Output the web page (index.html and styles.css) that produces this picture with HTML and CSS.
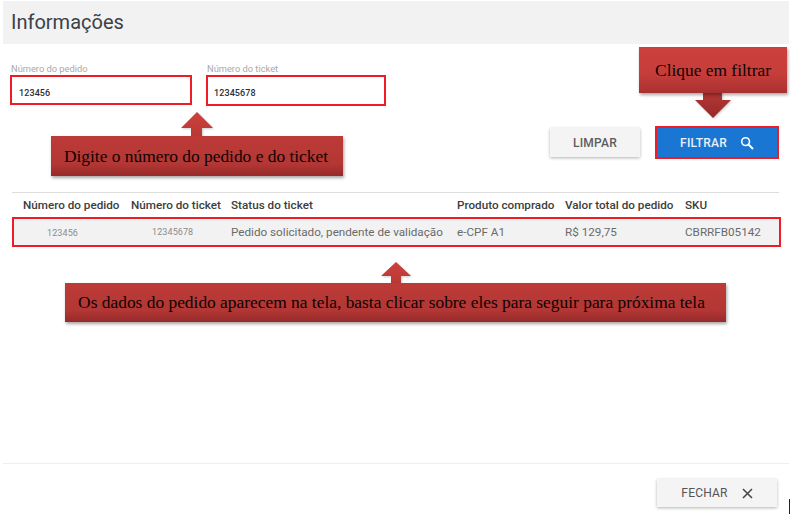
FILE: index.html
```html
<!DOCTYPE html>
<html lang="pt-BR">
<head>
    <meta charset="UTF-8">
    <meta name="viewport" content="width=device-width, initial-scale=1.0">
    <title>Informações</title>
    <link rel="stylesheet" href="styles.css">
</head>
<body>
    <div class="screen">
        <div class="header">Informações</div>

        <div class="filters">
            <div class="field">
                <label>Número do pedido</label>
                <div class="input">123456</div>
            </div>
            <div class="field field-ticket">
                <label>Número do ticket</label>
                <div class="input">12345678</div>
            </div>
        </div>

        <div class="actions">
            <button class="btn btn-clear">LIMPAR</button>
            <button class="btn btn-filter">FILTRAR
                <svg width="14" height="14" viewBox="0 0 14 14"><circle cx="5.6" cy="5.6" r="3.9" fill="none" stroke="#fff" stroke-width="1.6"/><path d="M8.5 8.5L13 13" stroke="#fff" stroke-width="2"/></svg>
            </button>
        </div>

        <div class="orders">
            <div class="orders-head">
                <div>Número do pedido</div>
                <div>Número do ticket</div>
                <div>Status do ticket</div>
                <div>Produto comprado</div>
                <div>Valor total do pedido</div>
                <div>SKU</div>
            </div>
            <div class="orders-row">
                <div class="num num-order">123456</div>
                <div class="num num-ticket">12345678</div>
                <div>Pedido solicitado, pendente de validação</div>
                <div>e-CPF A1</div>
                <div>R$ 129,75</div>
                <div>CBRRFB05142</div>
            </div>
        </div>

        <div class="footer">
            <button class="btn btn-close">FECHAR
                <svg width="11" height="11" viewBox="0 0 11 11"><path d="M1 1L10 10M10 1L1 10" stroke="#444" stroke-width="1.5"/></svg>
            </button>
        </div>
    </div>

    <!-- annotations drawn over the screenshot -->
    <svg class="arrows" width="791" height="518" viewBox="0 0 791 518">
        <defs>
            <linearGradient id="up" x1="0" y1="0" x2="0" y2="1">
                <stop offset="0" stop-color="#cd403c"/>
                <stop offset="1" stop-color="#b83935"/>
            </linearGradient>
            <linearGradient id="down" x1="0" y1="0" x2="0" y2="1">
                <stop offset="0" stop-color="#b53734"/>
                <stop offset="1" stop-color="#962a2a"/>
            </linearGradient>
        </defs>
        <path d="M197 112L213 128H202V137H191V128H181Z" fill="url(#up)"/>
        <path d="M396 262L411 276H401V284H391V276H381Z" fill="url(#up)"/>
        <path d="M703 92H722V100H731L713 118L695 100H703Z" fill="url(#down)"/>
    </svg>
    <div class="callout callout-digits">Digite o número do pedido e do ticket</div>
    <div class="callout callout-filter">Clique em filtrar</div>
    <div class="callout callout-data">Os dados do pedido aparecem na tela, basta clicar sobre eles para seguir para próxima tela</div>
    <div class="cursor"></div>
</body>
</html>
```

FILE: styles.css
```css
body {
    margin: 0;
    background: #fff;
    font-family: Roboto, Arial, sans-serif;
    color: #444;
}
.screen {
    width: 791px;
    height: 518px;
    box-sizing: border-box;
    padding: 1px 2px 0 3px;
    display: flex;
    flex-direction: column;
    overflow: hidden;
}
.header {
    height: 43px;
    flex: none;
    background: #f2f2f2;
    padding-left: 8px;
    font-size: 20px;
    line-height: 43px;
    color: #39414a;
}
.filters {
    display: flex;
    gap: 14px;
    margin: 19px 0 0 7px;
}
.field label {
    display: block;
    font-size: 9.3px;
    line-height: 11px;
    color: #a9a9a9;
    padding-left: 1px;
}
.input {
    width: 171px;
    height: 26px;
    border: 2px solid #ee1c25;
    margin-top: 1px;
    padding-left: 7px;
    font-size: 9px;
    font-weight: 500;
    line-height: 32px;
    letter-spacing: 0.1px;
    color: #2a2f36;
}
.field-ticket .input {
    width: 170px;
    height: 27px;
    padding-left: 6px;
}
.actions {
    display: flex;
    justify-content: flex-end;
    align-items: center;
    gap: 15px;
    margin: 20px 10px 0 0;
}
.btn {
    border: 0;
    font-family: Roboto, Arial, sans-serif;
    font-size: 12px;
    font-weight: 500;
    letter-spacing: 0.2px;
    display: flex;
    align-items: center;
    justify-content: center;
    padding: 0;
}
.btn-clear {
    width: 90px;
    height: 29px;
    background: #f4f4f4;
    color: #5c5c5c;
    box-shadow: 0 1px 3px rgba(0, 0, 0, 0.3);
}
.btn-filter {
    width: 124px;
    height: 33px;
    box-sizing: border-box;
    background: #1976d2;
    border: 2px solid #ee1c25;
    color: #e8f1fa;
    gap: 13px;
}
.orders {
    margin: 33px 10px 0 9px;
    border-top: 1px solid #ddd;
}
.orders-head, .orders-row {
    display: grid;
    grid-template-columns: 108px 100px 226px 108px 120px 1fr;
}
.orders-head {
    height: 24px;
    font-size: 11.7px;
    font-weight: 500;
    line-height: 24px;
    color: #3d3d3d;
    padding-left: 11px;
}
.orders-row {
    height: 30px;
    box-sizing: border-box;
    margin-right: -2px;
    padding-left: 9px;
    background: #f2f2f2;
    border: 2px solid #ee1c25;
    font-size: 11.7px;
    line-height: 26px;
    color: #6a6a6a;
}
.num {
    font-size: 9px;
    letter-spacing: 0.1px;
    color: #8b8b8b;
}
.num-order {
    padding-left: 24px;
    line-height: 29px;
}
.num-ticket {
    padding-left: 21px;
}
.footer {
    margin-top: auto;
    height: 55px;
    flex: none;
    border-top: 1px solid #eee;
    display: flex;
    justify-content: flex-end;
    padding: 15px 12px 0 0;
    box-sizing: border-box;
}
.btn-close {
    width: 120px;
    height: 28px;
    background: #f4f4f4;
    color: #555;
    font-weight: 400;
    gap: 14px;
    box-shadow: 0 1px 3px rgba(0, 0, 0, 0.3);
}
.arrows {
    position: absolute;
    left: 0;
    top: 0;
    filter: drop-shadow(1px 1px 1px rgba(0, 0, 0, 0.2));
}
.callout {
    position: absolute;
    box-sizing: border-box;
    display: flex;
    align-items: center;
    justify-content: center;
    background: linear-gradient(#bd3a37, #b33734 70%, #962a2a);
    box-shadow: 1px 2px 3px rgba(0, 0, 0, 0.35);
    font-family: "Liberation Serif", "Times New Roman", serif;
    font-size: 17.4px;
    color: #0e0202;
    white-space: nowrap;
}
.callout-digits {
    left: 51px;
    top: 136px;
    width: 292px;
    height: 40px;
    padding-right: 2px;
}
.callout-filter {
    left: 639px;
    top: 47px;
    width: 148px;
    height: 46px;
    background: linear-gradient(#cd403c, #c53d39 60%, #a83130);
}
.callout-data {
    left: 65px;
    top: 283px;
    width: 661px;
    height: 39px;
    padding-right: 8px;
}
.cursor {
    position: absolute;
    left: 789px;
    top: 499px;
    width: 1px;
    height: 15px;
    background: #222;
}
```
